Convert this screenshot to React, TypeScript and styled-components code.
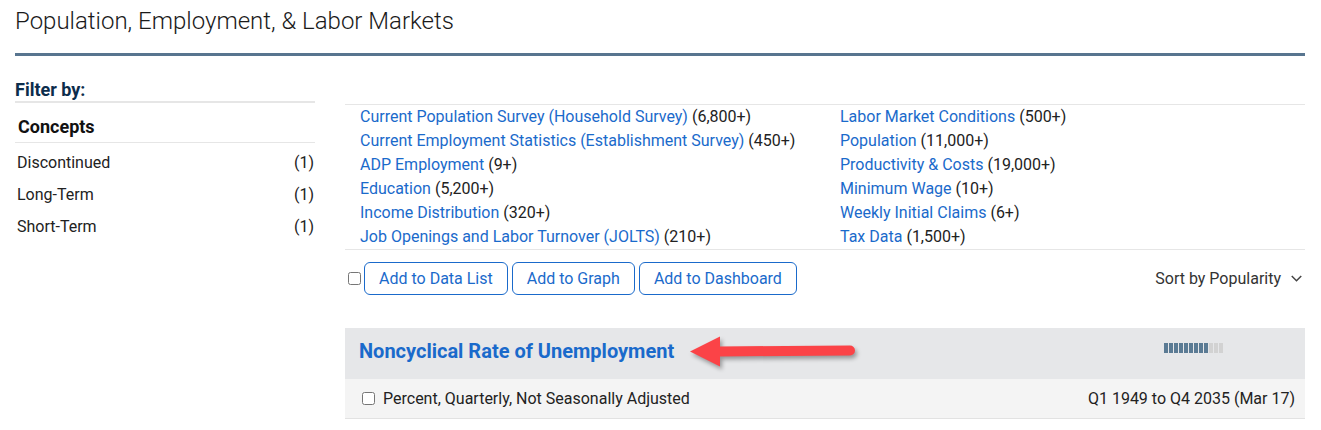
import React from "react";
import styled, { createGlobalStyle } from "styled-components";

const topicsLeft = [
  { name: "Current Population Survey (Household Survey)", count: "6,800+" },
  { name: "Current Employment Statistics (Establishment Survey)", count: "450+" },
  { name: "ADP Employment", count: "9+" },
  { name: "Education", count: "5,200+" },
  { name: "Income Distribution", count: "320+" },
  { name: "Job Openings and Labor Turnover (JOLTS)", count: "210+" },
];

const topicsRight = [
  { name: "Labor Market Conditions", count: "500+" },
  { name: "Population", count: "11,000+" },
  { name: "Productivity & Costs", count: "19,000+" },
  { name: "Minimum Wage", count: "10+" },
  { name: "Weekly Initial Claims", count: "6+" },
  { name: "Tax Data", count: "1,500+" },
];

const concepts = ["Discontinued", "Long-Term", "Short-Term"];

export default () => {
  return (
    <>
      <GlobalStyle />
      <Page>
        <PageTitle>Population, Employment, &amp; Labor Markets</PageTitle>
        <Body>
          <Sidebar>
            <FilterHead>Filter by:</FilterHead>
            <GroupHead>Concepts</GroupHead>
            {concepts.map((c) => (
              <FilterItem key={c}>
                <span>{c}</span>
                <span>(1)</span>
              </FilterItem>
            ))}
          </Sidebar>
          <Main>
            <Topics>
              {[topicsLeft, topicsRight].map((col, i) => (
                <TopicCol key={i}>
                  {col.map((t) => (
                    <TopicRow key={t.name}>
                      <TopicLink>{t.name}</TopicLink> ({t.count})
                    </TopicRow>
                  ))}
                </TopicCol>
              ))}
            </Topics>
            <Actions>
              <ButtonGroup>
                <CheckBox type="checkbox" />
                <ActionButton>Add to Data List</ActionButton>
                <ActionButton>Add to Graph</ActionButton>
                <ActionButton>Add to Dashboard</ActionButton>
              </ButtonGroup>
              <Sort>
                Sort by Popularity
                <svg width="11" height="7" viewBox="0 0 11 7">
                  <path d="M0.75 1l4.75 4.75L10.25 1" fill="none" stroke="#444" strokeWidth="1.5" />
                </svg>
              </Sort>
            </Actions>
            <Series>
              <SeriesHead>
                <SeriesTitle>Noncyclical Rate of Unemployment</SeriesTitle>
                <Arrow width="180" height="45" viewBox="0 0 180 45">
                  <line x1="34" y1="21.5" x2="165" y2="20.5" stroke="#fb4347" strokeWidth="10" strokeLinecap="round" />
                  <polygon points="5,21.5 35,6.5 35,36.5" fill="#fb4347" />
                </Arrow>
                <Popularity>
                  {Array.from({ length: 12 }).map((_, i) => (
                    <Seg key={i} $on={i < 9} />
                  ))}
                </Popularity>
              </SeriesHead>
              <SeriesRow>
                <RowCheck type="checkbox" />
                <Units>Percent, Quarterly, Not Seasonally Adjusted</Units>
                <Range>Q1 1949 to Q4 2035 (Mar 17)</Range>
              </SeriesRow>
            </Series>
          </Main>
        </Body>
      </Page>
    </>
  );
};

const GlobalStyle = createGlobalStyle`
  body {
    margin: 0;
    background: #fff;
    font-family: Roboto, "Liberation Sans", sans-serif;
    color: #222;
  }
`;

const Page = styled.div`
  padding: 0 16px 0 15px;
`;

const PageTitle = styled.h1`
  margin: 0;
  padding: 7px 0 17px;
  font-size: 24px;
  line-height: 29px;
  font-weight: 300;
  color: #1a1a1a;
  border-bottom: 3px solid #58758f;
`;

const Body = styled.div`
  display: flex;
  gap: 30px;
  margin-top: 23px;
`;

const Sidebar = styled.div`
  width: 300px;
  flex: none;
`;

const FilterHead = styled.div`
  font-size: 18px;
  line-height: 22px;
  font-weight: 700;
  color: #0c2d4c;
  border-bottom: 2px solid #e6e6e6;
`;

const GroupHead = styled.div`
  padding: 13px 3px 4px;
  font-size: 18px;
  line-height: 22px;
  font-weight: 700;
  color: #111;
  border-bottom: 1px solid #e6e6e6;
  margin-bottom: 4px;
`;

const FilterItem = styled.div`
  display: flex;
  justify-content: space-between;
  padding: 0 1px 0 2px;
  font-size: 16px;
  line-height: 32px;
  color: #222;
`;

const Main = styled.div`
  flex: 1;
  padding-top: 25px;
`;

const Topics = styled.div`
  display: grid;
  grid-template-columns: 1fr 1fr;
  border-top: 1px solid #e6e6e6;
  border-bottom: 1px solid #e6e6e6;
`;

const TopicCol = styled.div`
  padding-left: 15px;
`;

const TopicRow = styled.div`
  font-size: 16px;
  line-height: 24px;
  color: #222;
  white-space: nowrap;
`;

const TopicLink = styled.span`
  color: #1a6acb;
`;

const Actions = styled.div`
  display: flex;
  justify-content: space-between;
  align-items: center;
  margin-top: 12px;
`;

const ButtonGroup = styled.div`
  display: flex;
  align-items: center;
  gap: 4px;
`;

const CheckBox = styled.input`
  width: 13px;
  height: 13px;
  margin: 0 -1px 0 3px;
`;

const ActionButton = styled.button`
  height: 33px;
  padding: 0 14px;
  background: #fff;
  border: 1px solid #1a6acb;
  border-radius: 6px;
  color: #1a6acb;
  font-family: Roboto, "Liberation Sans", sans-serif;
  font-size: 16px;
`;

const Sort = styled.div`
  display: flex;
  align-items: center;
  gap: 10px;
  padding-right: 3px;
  font-size: 16px;
  color: #333;
`;

const Series = styled.div`
  margin-top: 33px;
`;

const SeriesHead = styled.div`
  position: relative;
  display: flex;
  align-items: flex-start;
  height: 51px;
  box-sizing: border-box;
  padding: 11px 82px 0 14px;
  background: #e6e7e9;
`;

const SeriesTitle = styled.div`
  flex: 1;
  font-size: 20px;
  line-height: 24px;
  font-weight: 700;
  color: #1a6acb;
`;

const Arrow = styled.svg`
  position: absolute;
  left: 340px;
  top: 2px;
  filter: drop-shadow(2px 3px 2px rgba(0, 0, 0, 0.35));
`;

const Popularity = styled.div`
  display: flex;
  gap: 1px;
  margin-top: 4px;
`;

const Seg = styled.span<{ $on: boolean }>`
  width: 4px;
  height: 10px;
  background: ${(p) => (p.$on ? "#5b7b94" : "#d2d2d2")};
`;

const SeriesRow = styled.div`
  display: flex;
  align-items: center;
  height: 40px;
  box-sizing: border-box;
  padding: 0 10px 1px 13px;
  background: #f4f4f4;
  border-bottom: 1px solid #e2e2e2;
  font-size: 16px;
  color: #222;
`;

const RowCheck = styled.input`
  width: 13px;
  height: 13px;
  margin: 0 8px 0 4px;
`;

const Units = styled.span`
  flex: 1;
`;

const Range = styled.span``;
